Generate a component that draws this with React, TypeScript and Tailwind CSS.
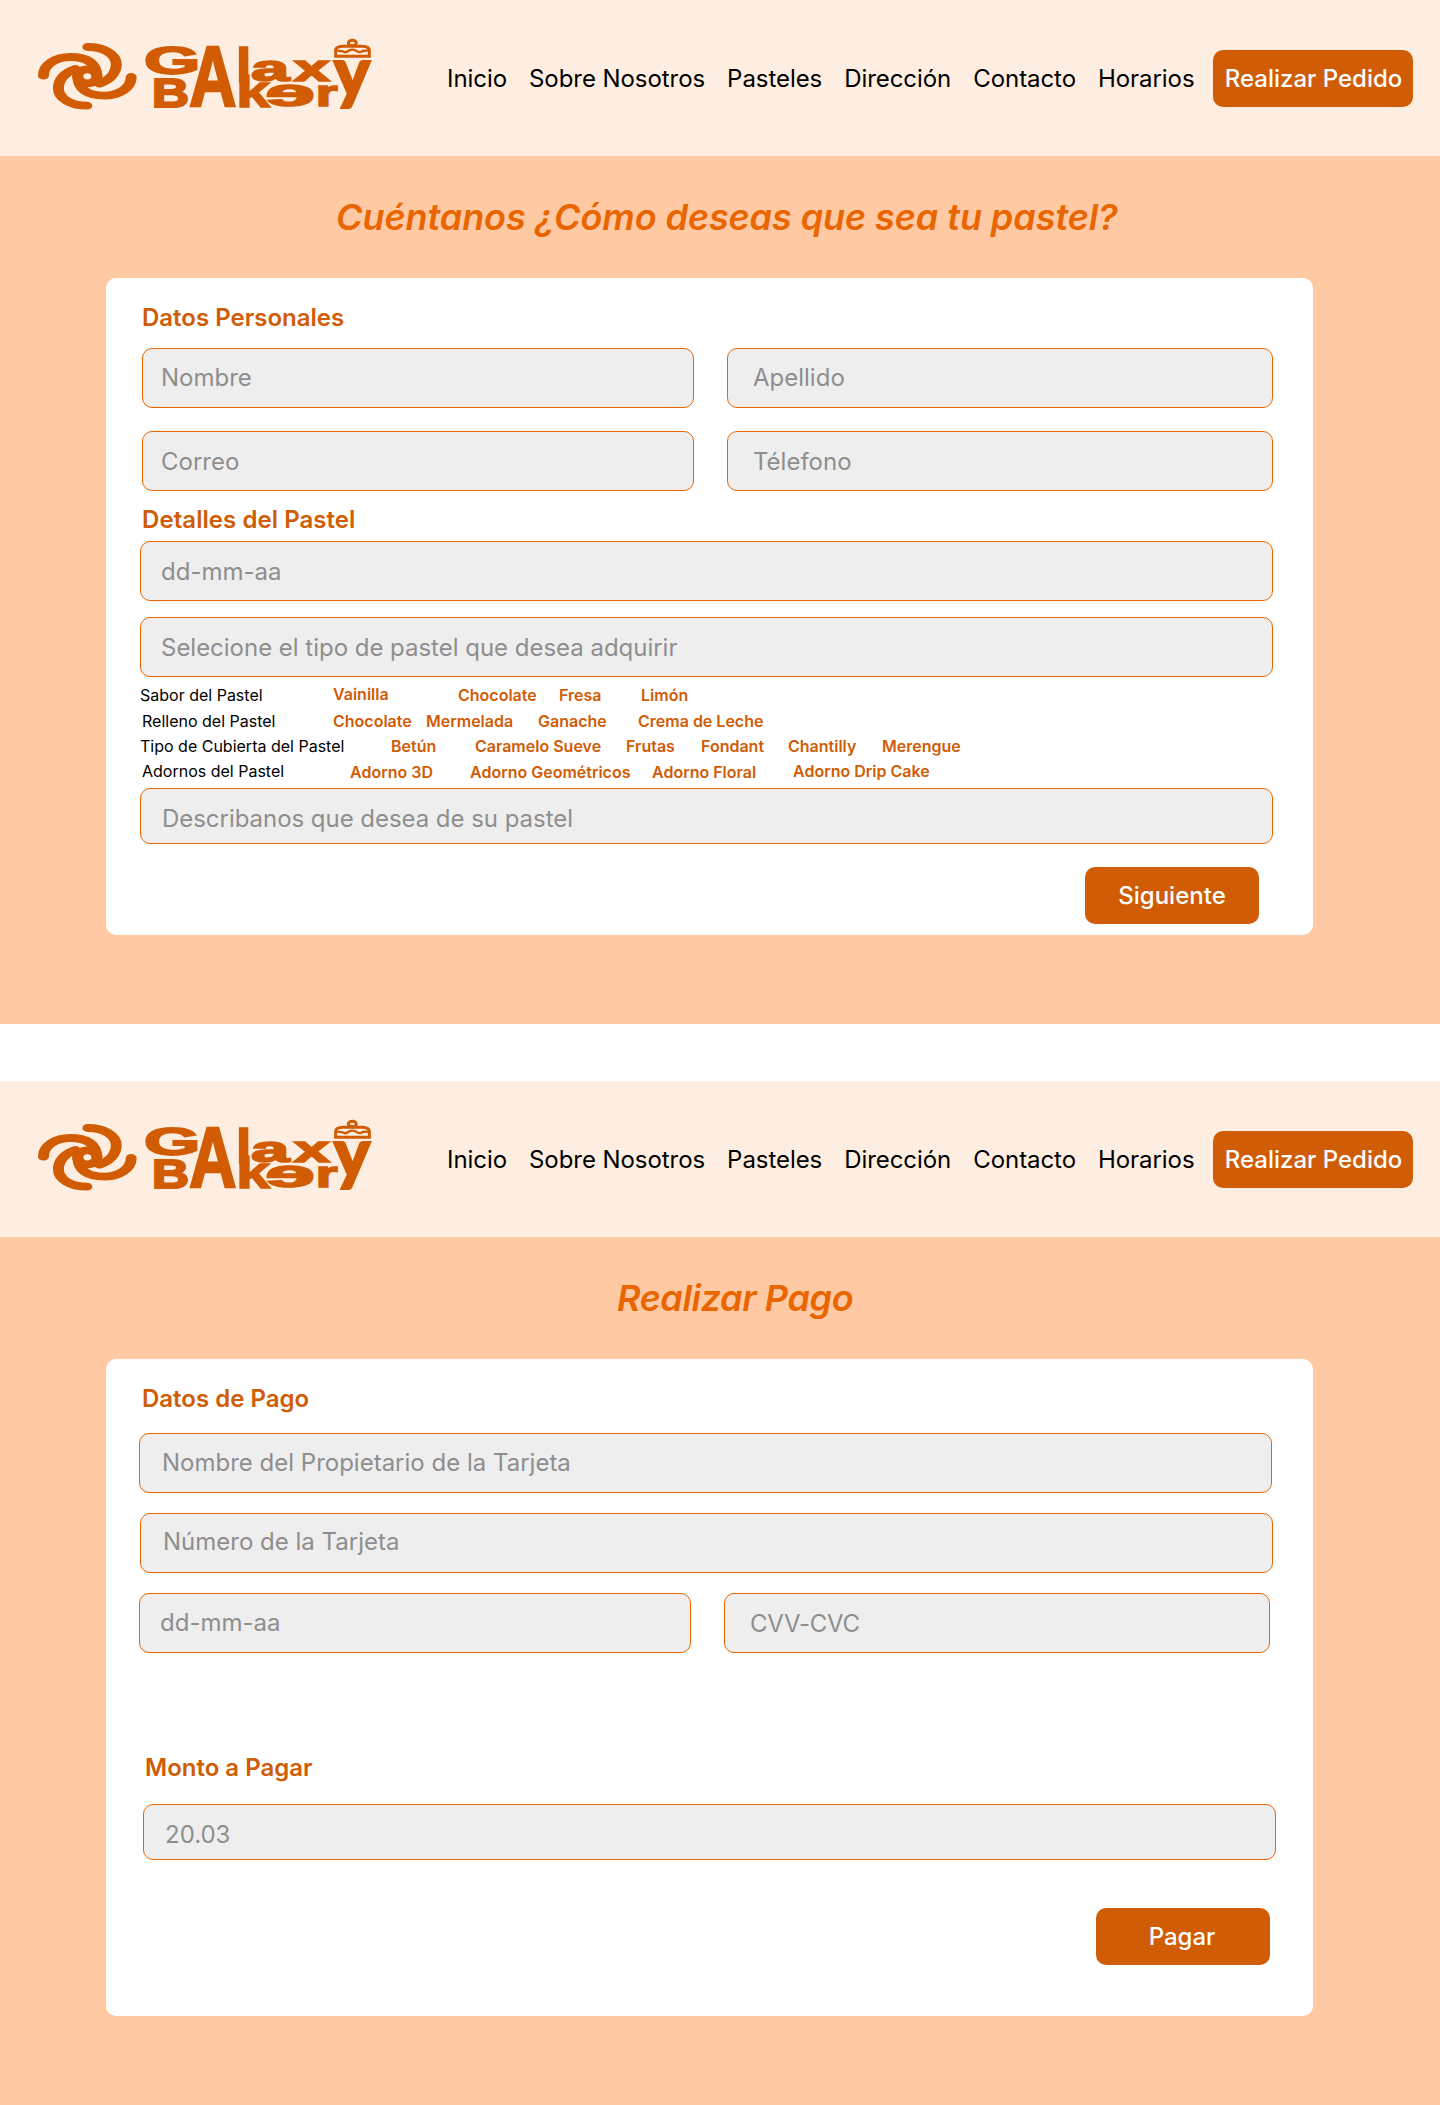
import type { ReactNode } from "react";

type GlyphProps = { c: string; x: number; y: number; sx: number; sy: number; font?: string; weight?: number; stroke?: number };

function Glyph({ c, x, y, sx, sy, font = "Liberation Sans", weight = 700, stroke = 3 }: GlyphProps) {
  return (
    <text
      transform={`translate(${x} ${y}) scale(${sx} ${sy})`}
      fontFamily={`"${font}", sans-serif`}
      fontWeight={weight}
      fontSize="100"
      stroke="#d25c03"
      strokeWidth={stroke}
    >
      {c}
    </text>
  );
}

function Logo() {
  return (
    <svg viewBox="0 0 1140 330" className="mt-5 ml-5 h-[110px] w-[380px] shrink-0 fill-[#d25c03]" role="img" aria-label="Galaxy Bakery">
      {/* Galaxy spiral: two arms, each repeated half a turn round the centre */}
      <g fill="none" stroke="#d25c03" strokeWidth="23.5" strokeLinecap="round" transform="translate(202 169) scale(1.4 1)">
        <path d="M1 -88C36 -88 62 -66 62 -36C62 -10 48 12 26 22" />
        <path d="M-94 -2C-94 -35 -68 -58 -36 -58C0 -58 20 -38 20 -2" />
        <path d="M-1 88C-36 88 -62 66 -62 36C-62 10 -48 -12 -26 -22" />
        <path d="M94 2C94 35 68 58 36 58C0 58 -20 38 -20 2" />
        <circle r="21" />
      </g>
      <Glyph c="G" x={372} y={163} sx={2.17} sy={1.19} stroke={4.5} />
      <Glyph c="A" x={508} y={259} sx={1.96} sy={2.57} />
      <Glyph c="l" x={647} y={187} sx={1.7} sy={1.47} />
      <Glyph c="a" x={693} y={183.5} sx={2.07} sy={1.12} stroke={4.5} />
      <Glyph c="x" x={821} y={183.5} sx={1.94} sy={1.13} stroke={4.5} />
      <Glyph c="y" x={941} y={228} sx={2.05} sy={2.05} font="Lato" weight={900} />
      <Glyph c="B" x={396} y={260} sx={1.54} sy={1.22} stroke={5} />
      <Glyph c="k" x={648} y={260} sx={1.84} sy={1.34} />
      {/* The e of Bakery is mirrored */}
      <Glyph c="e" x={885} y={258} sx={-2.67} sy={1.14} stroke={4.5} />
      <Glyph c="r" x={887} y={257} sx={1.68} sy={1.12} stroke={4.5} />
      {/* Cake */}
      <g fill="none" stroke="#d25c03" strokeWidth="9">
        <path d="M947 109V90Q948 80 968 79H1028Q1047 80 1048 90V109Z" />
        <path d="M948 92Q962 92 968 94Q978 100 986 92Q998 86 1008 92Q1018 100 1028 93Q1036 91 1048 92" strokeWidth="7" />
        <ellipse cx="997" cy="69" rx="12" ry="8" />
      </g>
    </svg>
  );
}

const links = ["Inicio", "Sobre Nosotros", "Pasteles", "Dirección", "Contacto", "Horarios"];

function Header() {
  return (
    <header className="flex h-[156px] bg-[#fdeee1]">
      <Logo />
      <nav className="mt-[50px] ml-[47px] flex h-[57px] items-center gap-[22px] tracking-[-0.06px] whitespace-nowrap">
        {links.map((l) => (
          <a key={l}>{l}</a>
        ))}
      </nav>
      <button className="mt-[50px] mr-[27px] ml-auto h-[57px] w-[200px] shrink-0 rounded-[10px] bg-[#d05c05] pl-px font-medium whitespace-nowrap text-white">
        Realizar Pedido
      </button>
    </header>
  );
}

function Field({ className, children }: { className: string; children: ReactNode }) {
  return <div className={`rounded-[10px] border border-[#e96500] bg-[#eeeeee] text-[#8e8e8e] ${className}`}>{children}</div>;
}

function Heading({ className, children }: { className: string; children: ReactNode }) {
  return <h2 className={`font-semibold text-[#d05c05] ${className}`}>{children}</h2>;
}

function Screen({ title, titleClass, children }: { title: string; titleClass: string; children: ReactNode }) {
  return (
    <section className="flex h-[1024px] flex-col bg-[#fec9a3]">
      <Header />
      <h1 className={`mt-[39px] h-11 text-4xl leading-[44px] font-semibold whitespace-nowrap text-[#e96500] italic ${titleClass}`}>{title}</h1>
      <div className="mt-[39px] ml-[106px] flex h-[657px] w-[1207px] flex-col rounded-[10px] bg-white">{children}</div>
    </section>
  );
}

type Option = [label: string, className: string];

const optionRows: { label: string; className: string; labelClass: string; options: Option[] }[] = [
  {
    label: "Sabor del Pastel",
    className: "ml-[34px] h-[26px]",
    labelClass: "w-[193px]",
    options: [["Vainilla", "w-[125px] -mt-px"], ["Chocolate", "w-[101px]"], ["Fresa", "w-[82px]"], ["Limón", ""]],
  },
  {
    label: "Relleno del Pastel",
    className: "ml-[36px] h-[25px]",
    labelClass: "w-[191px]",
    options: [["Chocolate", "w-[93px]"], ["Mermelada", "w-[112px]"], ["Ganache", "w-[100px]"], ["Crema de Leche", ""]],
  },
  {
    label: "Tipo de Cubierta del Pastel",
    className: "ml-[34px] h-[25px]",
    labelClass: "w-[251px]",
    options: [["Betún", "w-[84px]"], ["Caramelo Sueve", "w-[151px]"], ["Frutas", "w-[75px]"], ["Fondant", "w-[87px]"], ["Chantilly", "w-[94px]"], ["Merengue", ""]],
  },
  {
    label: "Adornos del Pastel",
    className: "ml-[36px] h-[25px]",
    labelClass: "w-[208px]",
    options: [["Adorno 3D", "w-[120px] mt-px"], ["Adorno Geométricos", "w-[182px] mt-px"], ["Adorno Floral", "w-[141px] mt-px"], ["Adorno Drip Cake", ""]],
  },
];

function OrderForm() {
  return (
    <>
      <Heading className="mt-[25px] ml-[36px]">Datos Personales</Heading>
      <div className="mt-4 ml-9 grid grid-cols-[552px_546px] gap-x-[33px] gap-y-[23px]">
        <Field className="h-[60px] pt-3.5 pl-[18px]">Nombre</Field>
        <Field className="h-[60px] pt-3.5 pl-[25px]">Apellido</Field>
        <Field className="h-[60px] pt-[15px] pl-[18px]">Correo</Field>
        <Field className="h-[60px] pt-[15px] pl-[25px]">Télefono</Field>
      </div>
      <Heading className="mt-3.5 ml-[36px] tracking-[0.06px]">Detalles del Pastel</Heading>
      <Field className="mt-[7px] ml-[34px] h-[60px] w-[1133px] pt-[15px] pl-5">dd-mm-aa</Field>
      <Field className="mt-4 ml-[34px] h-[60px] w-[1133px] pt-[15px] pl-5 tracking-[-0.02px]">Selecione el tipo de pastel que desea adquirir</Field>
      <div className="mt-[9px] h-[102px] text-base leading-[19px] whitespace-nowrap">
        {optionRows.map((row) => (
          <div key={row.label} className={`flex ${row.className}`}>
            <span className={`shrink-0 text-black ${row.labelClass}`}>{row.label}</span>
            {row.options.map(([name, cls]) => (
              <span key={name} className={`shrink-0 font-semibold text-[#d05c05] ${cls}`}>
                {name}
              </span>
            ))}
          </div>
        ))}
      </div>
      <Field className="ml-[34px] h-14 w-[1133px] pt-[15px] pl-[21px] tracking-[-0.04px]">Describanos que desea de su pastel</Field>
      <button className="mt-[23px] mr-[54px] h-[57px] w-[174px] self-end rounded-[10px] bg-[#d05c05] font-medium text-white">Siguiente</button>
    </>
  );
}

function PaymentForm() {
  return (
    <>
      <Heading className="mt-[25px] ml-[36px]">Datos de Pago</Heading>
      <Field className="mt-5 ml-[33px] h-[60px] w-[1133px] pt-3.5 pl-[22px]">Nombre del Propietario de la Tarjeta</Field>
      <Field className="mt-5 ml-[34px] h-[60px] w-[1133px] pt-[13px] pl-[22px]">Número de la Tarjeta</Field>
      <div className="mt-5 ml-[33px] grid grid-cols-[552px_546px] gap-x-[33px]">
        <Field className="h-[60px] pt-3.5 pl-5">dd-mm-aa</Field>
        <Field className="h-[60px] pt-[15px] pl-[25px] tracking-[-0.25px]">CVV-CVC</Field>
      </div>
      <Heading className="mt-[100px] ml-[39px]">Monto a Pagar</Heading>
      <Field className="mt-[22px] ml-[37px] h-14 w-[1133px] pt-[15px] pl-[21px]">20.03</Field>
      <button className="mt-12 mr-[43px] h-[57px] w-[174px] self-end rounded-[10px] bg-[#d05c05] pr-0.5 font-medium text-white">Pagar</button>
    </>
  );
}

export default function App() {
  return (
    <main className="flex w-[1440px] flex-col gap-[57px] bg-white font-['Inter',sans-serif] text-2xl leading-[29px] text-black">
      <Screen title="Cuéntanos ¿Cómo deseas que sea tu pastel?" titleClass="ml-[336px] tracking-[-0.07px]">
        <OrderForm />
      </Screen>
      <Screen title="Realizar Pago" titleClass="ml-[617px] tracking-[-0.36px]">
        <PaymentForm />
      </Screen>
    </main>
  );
}
